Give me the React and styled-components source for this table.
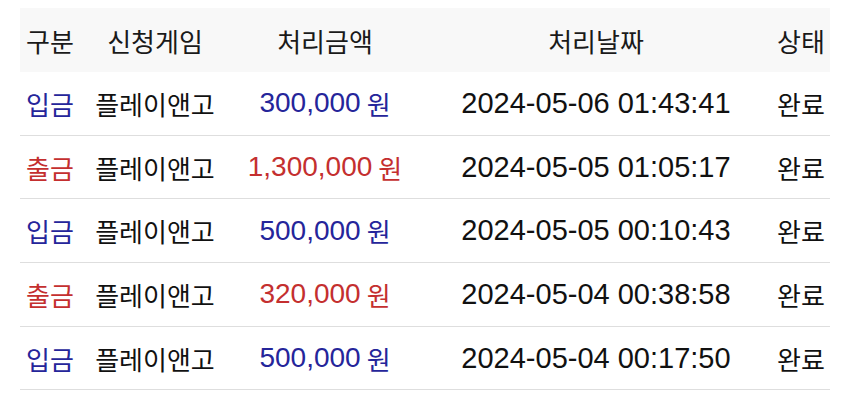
import React from 'react'
import styled, { createGlobalStyle } from "styled-components";

const GlobalStyle = createGlobalStyle`
  body {
    margin: 0;
    background: #ffffff;
    font-family: "Liberation Sans", "Noto Sans CJK KR", sans-serif;
    color: #111;
  }
`;

const Page = styled.div`
  padding: 8px 20px 0 20px;
`;

const Table = styled.div`
  width: 810px;
  display: grid;
  grid-template-columns: 60px 150px 190px 352px 58px;
`;

const HeadRow = styled.div`
  display: contents;
`;

const HeadCell = styled.div`
  height: 64px;
  background-color: #f8f8f8;
  display: flex;
  align-items: center;
  justify-content: center;
  font-family: "Noto Sans CJK KR", sans-serif;
  font-size: 26px;
  color: #1a1a1a;
  white-space: nowrap;
`;

const Cell = styled.div`
  height: 62.7px;
  border-bottom: 1px solid #dedede;
  display: flex;
  align-items: center;
  justify-content: center;
  white-space: nowrap;
  color: ${(p) => p.$color || "#111"};
`;

const Ko = styled.span`
  font-family: "Noto Sans CJK KR", sans-serif;
  font-size: 26px;
`;

const Num = styled.span`
  font-family: "Liberation Sans", sans-serif;
  font-size: ${(p) => p.$size || 28}px;
`;

const Won = styled(Ko)`
  margin-left: 6px;
`;

const BLUE = "#25259a";
const RED = "#c42f2f";

const rows = [
  { type: "입금", amount: "300,000", date: "2024-05-06 01:43:41" },
  { type: "출금", amount: "1,300,000", date: "2024-05-05 01:05:17" },
  { type: "입금", amount: "500,000", date: "2024-05-05 00:10:43" },
  { type: "출금", amount: "320,000", date: "2024-05-04 00:38:58" },
  { type: "입금", amount: "500,000", date: "2024-05-04 00:17:50" },
];

const App = () => {
  return (
    <Page>
      <GlobalStyle />
      <Table>
        <HeadRow>
          <HeadCell>구분</HeadCell>
          <HeadCell>신청게임</HeadCell>
          <HeadCell>처리금액</HeadCell>
          <HeadCell>처리날짜</HeadCell>
          <HeadCell>상태</HeadCell>
        </HeadRow>
        {rows.map((r, i) => {
          const color = r.type === "입금" ? BLUE : RED;
          return (
            <React.Fragment key={i}>
              <Cell $color={color}><Ko>{r.type}</Ko></Cell>
              <Cell><Ko>플레이앤고</Ko></Cell>
              <Cell $color={color}>
                <Num>{r.amount}</Num>
                <Won>원</Won>
              </Cell>
              <Cell><Num $size={29}>{r.date}</Num></Cell>
              <Cell><Ko>완료</Ko></Cell>
            </React.Fragment>
          );
        })}
      </Table>
    </Page>
  );
}

export default App
